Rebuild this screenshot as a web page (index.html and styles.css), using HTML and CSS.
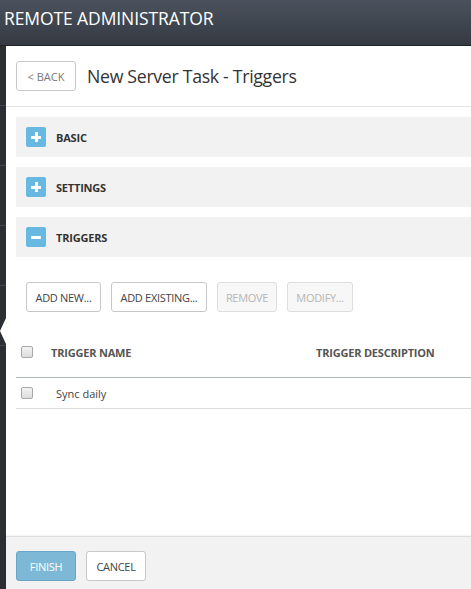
FILE: index.html
```html
<!DOCTYPE html>
<html>
<head>
<meta charset="utf-8">
<link rel="stylesheet" href="styles.css">
</head>
<body>
<header class="topbar">
  <div class="brand">REMOTE ADMINISTRATOR</div>
</header>
<div class="workspace">
  <aside class="sidebar">
    <div class="side-item"></div>
    <div class="side-item"></div>
    <div class="side-item"></div>
    <div class="side-item"></div>
    <div class="side-item"></div>
  </aside>
  <main class="panel">
    <div class="pointer"></div>
    <div class="panel-head">
      <button class="btn btn-back">&lt; BACK</button>
      <h1 class="title">New Server Task - Triggers</h1>
    </div>
    <div class="panel-body">
      <div class="section">
        <span class="toggle"><span class="bar-h"></span><span class="bar-v"></span></span>
        <span class="section-label">BASIC</span>
      </div>
      <div class="section">
        <span class="toggle"><span class="bar-h"></span><span class="bar-v"></span></span>
        <span class="section-label">SETTINGS</span>
      </div>
      <div class="section">
        <span class="toggle"><span class="bar-h"></span></span>
        <span class="section-label">TRIGGERS</span>
      </div>
      <div class="toolbar">
        <button class="btn">ADD NEW...</button>
        <button class="btn">ADD EXISTING...</button>
        <button class="btn btn-disabled">REMOVE</button>
        <button class="btn btn-disabled">MODIFY...</button>
      </div>
      <div class="table">
        <div class="trow thead">
          <span class="cell-check"><span class="checkbox"></span></span>
          <span class="cell-name">TRIGGER NAME</span>
          <span class="cell-desc">TRIGGER DESCRIPTION</span>
        </div>
        <div class="trow tbody-row">
          <span class="cell-check"><span class="checkbox"></span></span>
          <span class="cell-name cell-text">Sync daily</span>
          <span class="cell-desc"></span>
        </div>
      </div>
    </div>
    <div class="panel-foot">
      <button class="btn btn-primary">FINISH</button>
      <button class="btn btn-white">CANCEL</button>
    </div>
  </main>
</div>
</body>
</html>
```
FILE: styles.css
```css
html, body {
  margin: 0;
  padding: 0;
  width: 471px;
  height: 589px;
  overflow: hidden;
  font-family: "Open Sans", "Noto Sans", sans-serif;
  background: #2b2e33;
}
.topbar {
  background: linear-gradient(#4a525d, #353a42);
  border-bottom: 1px solid #1f2226;
  display: flex;
  align-items: center;
  padding-left: 4px;
  box-sizing: border-box;
  height: 46px;
}
.brand {
  color: #ffffff;
  font-size: 17.5px;
  letter-spacing: -0.1px;
  margin-top: -9px;
}
.workspace {
  display: flex;
  height: 543px;
}
.sidebar {
  width: 6px;
  flex: none;
  background: #2b2e33;
  display: flex;
  flex-direction: column;
}
.side-item {
  height: 59px;
  border-bottom: 1px solid #44484e;
}
.panel {
  position: relative;
  flex: 1;
  min-width: 0;
  background: #ffffff;
  display: flex;
  flex-direction: column;
}
.pointer {
  position: absolute;
  left: -6px;
  top: 272px;
  width: 0;
  height: 0;
  border-top: 13px solid transparent;
  border-bottom: 13px solid transparent;
  border-right: 6px solid #ffffff;
}
.panel-head {
  border-bottom: 1px solid #e6e6e6;
  display: flex;
  align-items: center;
  padding-left: 10px;
  gap: 11px;
  box-sizing: border-box;
  height: 61px;
}
.title {
  margin: 0;
  font-weight: normal;
  font-size: 17.7px;
  color: #333;
  letter-spacing: -0.3px;
}
.btn {
  font-family: inherit;
  height: 30px;
  padding: 0;
  border: 1px solid #c8c8c8;
  border-radius: 3px;
  background: #ffffff;
  color: #444;
  font-size: 11px;
  letter-spacing: -0.3px;
  box-sizing: border-box;
  cursor: pointer;
  flex: none;
}
.btn-back {
  width: 60px;
  color: #777;
  font-size: 11px;
  letter-spacing: 0;
}
.panel-body {
  flex: 1;
  padding: 10px 0 0 10px;
}
.section {
  height: 40px;
  background: #f2f2f2;
  display: flex;
  align-items: center;
  padding-left: 10px;
  margin-bottom: 10px;
  gap: 10px;
}
.toggle {
  position: relative;
  width: 20px;
  height: 20px;
  background: #68b9e1;
  border-radius: 2px;
  flex: none;
}
.bar-h {
  position: absolute;
  left: 5px;
  top: 8.5px;
  width: 10px;
  height: 3px;
  background: #fff;
}
.bar-v {
  position: absolute;
  left: 8.5px;
  top: 5px;
  width: 3px;
  height: 10px;
  background: #fff;
}
.section-label {
  font-size: 11px;
  font-weight: bold;
  color: #333;
  letter-spacing: -0.2px;
}
.toolbar {
  display: flex;
  gap: 10px;
  padding: 15px 0 0 10px;
}
.toolbar .btn:nth-child(1) { width: 75px; }
.toolbar .btn:nth-child(2) { width: 96px; }
.toolbar .btn:nth-child(3) { width: 60px; }
.toolbar .btn:nth-child(4) { width: 66px; }
.btn-disabled {
  background: #f7f7f7;
  color: #b5b5b5;
  border-color: #dedede;
}
.table {
  margin-top: 15px;
}
.trow {
  display: flex;
  align-items: center;
}
.thead {
  height: 50px;
  border-bottom: 1px solid #b3b8bd;
  font-size: 11px;
  font-weight: bold;
  color: #555;
  letter-spacing: -0.2px;
}
.tbody-row {
  height: 30px;
  border-bottom: 1px solid #dcdcdc;
}
.cell-check {
  width: 35px;
  padding-left: 5px;
  box-sizing: border-box;
  display: flex;
  align-items: center;
  flex: none;
}
.checkbox {
  width: 12px;
  height: 12px;
  box-sizing: border-box;
  border: 1px solid #a9a9a9;
  border-radius: 2px;
  background: linear-gradient(#f3f3f3, #dcdcdc);
}
.cell-name {
  width: 265px;
  flex: none;
}
.cell-desc {
  white-space: nowrap;
}
.cell-text {
  font-size: 11px;
  color: #444;
  padding-left: 5px;
  box-sizing: border-box;
  font-weight: normal;
}
.panel-foot {
  height: 53px;
  background: #f2f2f2;
  border-top: 1px solid #dedede;
  box-shadow: 0 -1px 2px rgba(0,0,0,0.05);
  display: flex;
  align-items: flex-start;
  padding: 14px 0 0 10px;
  gap: 10px;
  box-sizing: border-box;
}
.btn-primary {
  width: 60px;
  background: #7db8d6;
  border-color: #6aa6c9;
  color: #ffffff;
}
.btn-white {
  width: 60px;
  color: #444;
}
```
